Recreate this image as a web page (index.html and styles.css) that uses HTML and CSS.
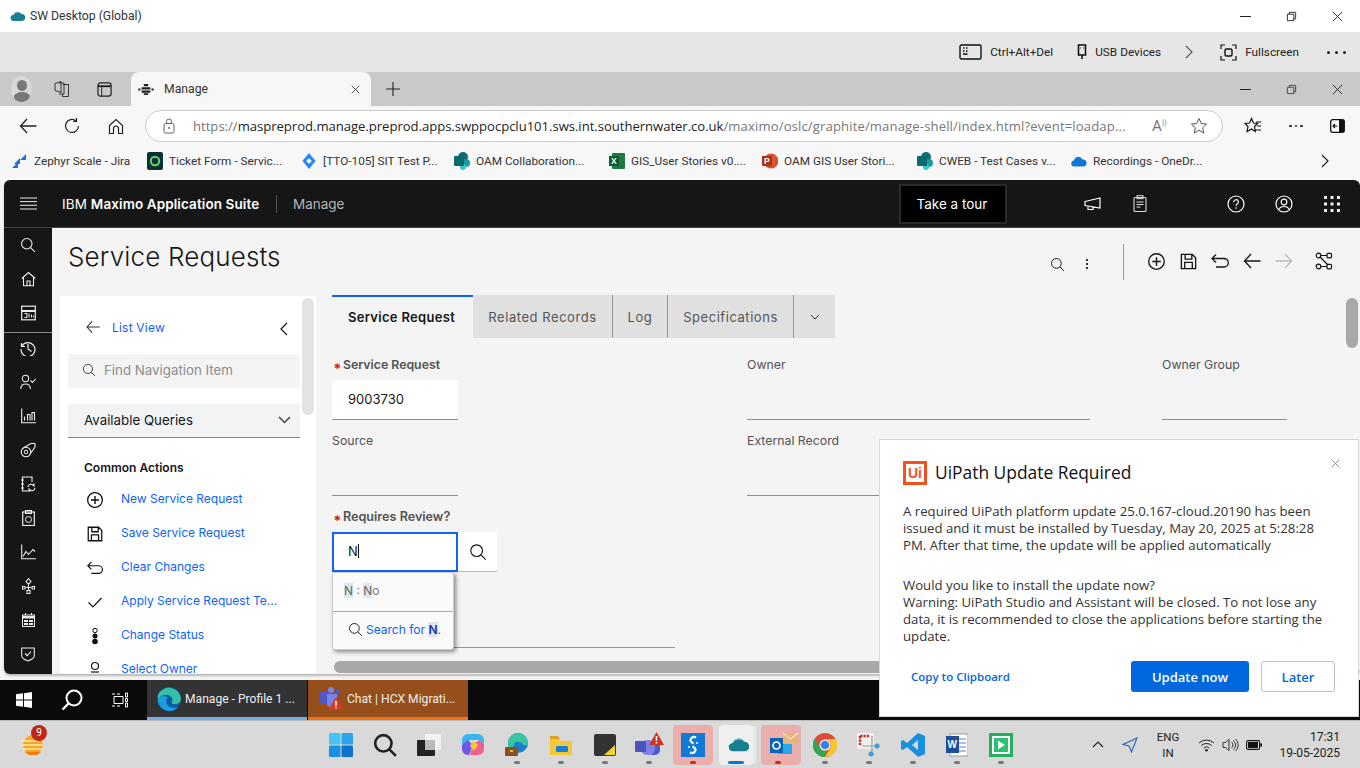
FILE: index.html
```html
<!DOCTYPE html>
<html lang="en">
<head>
    <meta charset="UTF-8">
    <title>SW Desktop (Global)</title>
    <link rel="stylesheet" href="styles.css">
</head>
<body>
    <svg class="sprites" width="0" height="0">
        <defs>
            <symbol id="i-search" viewBox="0 0 20 20"><circle cx="8.5" cy="8.5" r="6.5" fill="none" stroke="currentColor" stroke-width="1.3"/><path d="M13.2 13.2 18.5 18.5" stroke="currentColor" stroke-width="1.3"/></symbol>
            <symbol id="i-add" viewBox="0 0 20 20"><circle cx="10" cy="10" r="8.2" fill="none" stroke="currentColor" stroke-width="1.4"/><path d="M10 5.5v9M5.5 10h9" stroke="currentColor" stroke-width="1.6"/></symbol>
            <symbol id="i-save" viewBox="0 0 20 20"><path d="M3 2.5h11l3.5 3.5v11.500H2.5V2.5zM6.5 2.5v5h7v-5M6 17.5v-6.5h8v6.500" fill="none" stroke="currentColor" stroke-width="1.4"/></symbol>
            <symbol id="i-undo" viewBox="0 0 20 20"><path d="M6 3.5 2 7.5 6 11.5M2 7.5h12a4 4 0 0 1 0 8.500H6" fill="none" stroke="currentColor" stroke-width="1.3"/></symbol>
            <symbol id="i-back" viewBox="0 0 20 20"><path d="M9 3 2.5 10 9 17M2.5 10h16" fill="none" stroke="currentColor" stroke-width="1.3"/></symbol>
            <symbol id="i-next" viewBox="0 0 20 20"><path d="M11 3l6.5 7-6.500 7M17.500 10h-16" fill="none" stroke="currentColor" stroke-width="1.3"/></symbol>
            <symbol id="i-close" viewBox="0 0 12 12"><path d="M1 1l10 10M11 1 1 11" stroke="currentColor" stroke-width="1"/></symbol>
            <symbol id="i-restore" viewBox="0 0 12 12"><path d="M1.500 3.500h7v7h-7zM3.500 3.500v-2h7v7h-2" fill="none" stroke="currentColor" stroke-width="1"/></symbol>
            <symbol id="i-cloud" viewBox="0 0 20 16"><path d="M5 14.500a4 4 0 0 1-.5-8 6 6 0 0 1 11-1 4.500 4.500 0 0 1 .5 9z" fill="#167f92"/><path d="M4.500 6.500a6 6 0 0 1 11-1 7 7 0 0 0-11 1z" fill="#8fd3d8"/></symbol>
            <symbol id="i-share" viewBox="0 0 16 18"><circle cx="9" cy="5" r="5" fill="#0f6f74"/><circle cx="12" cy="11" r="4" fill="#1c9aa0"/><circle cx="9" cy="15" r="3" fill="#37c6d0"/><rect x="0" y="4" width="10" height="10" rx="1" fill="#0b6a6e"/></symbol>
        </defs>
    </svg>

    <header class="title-bar">
        <svg class="cloud-small"><use href="#i-cloud"/></svg>
        <span class="title-text">SW Desktop (Global)</span>
        <div class="win-controls">
            <span class="win-min"></span>
            <svg class="win-icon"><use href="#i-restore"/></svg>
            <svg class="win-icon"><use href="#i-close"/></svg>
        </div>
    </header>

    <div class="citrix-bar">
        <span class="citrix-item">
            <svg width="23" height="16" viewBox="0 0 23 16"><rect x="1" y="1" width="21" height="14" rx="1.500" fill="none" stroke="#111" stroke-width="1.400"/><path d="M4 4h1.500M7 4h1.500M4 7h1.500M7 7h1.500M4 10h4.500" stroke="#111" stroke-width="1.400"/></svg>
            Ctrl+Alt+Del
        </span>
        <span class="citrix-item usb">
            <svg width="10" height="16" viewBox="0 0 10 16"><path d="M1.500 1h7v10h-7zM5 11v4M3.500 4h.6M6 4h.6" fill="none" stroke="#111" stroke-width="1.600"/></svg>
            USB Devices
        </span>
        <svg class="citrix-chevron" width="8" height="14" viewBox="0 0 8 14"><path d="M1 1l6 6-6 6" fill="none" stroke="#555" stroke-width="1.100"/></svg>
        <span class="citrix-item full">
            <svg width="17" height="17" viewBox="0 0 17 17"><path d="M1 5V1h4M12 1h4v4M16 12v4h-4M5 16H1v-4" fill="none" stroke="#111" stroke-width="1.200"/><rect x="5" y="5" width="7" height="7" rx="1.500" fill="none" stroke="#111" stroke-width="1.400"/></svg>
            Fullscreen
        </span>
        <span class="citrix-more"><i></i><i></i><i></i></span>
    </div>

    <div class="tab-strip">
        <span class="avatar"><i class="avatar-head"></i><i class="avatar-body"></i></span>
        <svg class="strip-icon" width="16" height="18" viewBox="0 0 16 18"><path d="M1 3.500 7 1.500v11L1 10.500zM5 3h5v11H5M9 4.500h5.500v12H8.500V14" fill="none" stroke="#333" stroke-width="1"/></svg>
        <svg class="strip-icon" width="15" height="15" viewBox="0 0 16 16"><rect x="1" y="1" width="14" height="14" rx="2.500" fill="none" stroke="#222" stroke-width="1.300"/><path d="M1 4.500h14" stroke="#222" stroke-width="2"/><path d="M5 4.500V15" stroke="#222" stroke-width="1"/></svg>
        <div class="tab-active">
            <svg width="16" height="11" viewBox="0 0 14 10"><path d="M5 0h4v2H5zM3 3h8v2H3zM0 4h2v2H0zM12 4h2v2h-2zM3 6h8v2H3zM5 8.500h4V10H5z" fill="#222"/></svg>
            <span class="tab-label">Manage</span>
            <svg class="tab-close"><use href="#i-close"/></svg>
        </div>
        <svg class="tab-plus" width="14" height="14" viewBox="0 0 14 14"><path d="M7 0v14M0 7h14" stroke="#222" stroke-width="1.100"/></svg>
        <div class="win-controls">
            <span class="win-min"></span>
            <svg class="win-icon grey"><use href="#i-restore"/></svg>
            <svg class="win-icon"><use href="#i-close"/></svg>
        </div>
    </div>

    <div class="address-bar">
        <svg class="nav-back" width="20" height="20"><use href="#i-back"/></svg>
        <svg class="nav-refresh" width="18" height="18" viewBox="0 0 18 18"><path d="M15.500 9a6.500 6.500 0 1 1-2.500-5.200M13.500 1v3.300h-3.300" fill="none" stroke="#222" stroke-width="1.200"/></svg>
        <svg class="nav-home" width="16" height="17" viewBox="0 0 16 17"><path d="M1.500 7.500 8 1.500l6.500 6v8h-4v-5a2.500 2.500 0 0 0-5 0v5h-4z" fill="none" stroke="#222" stroke-width="1.200"/></svg>
        <div class="url-box">
            <svg width="12" height="16" viewBox="0 0 12 16"><rect x="1" y="5.500" width="10" height="9.500" rx="1.500" fill="none" stroke="#666" stroke-width="1"/><path d="M3.500 5.500V3.500a2.500 2.500 0 0 1 5 0v2" fill="none" stroke="#666"/><circle cx="6" cy="10" r=".9" fill="#666"/></svg>
            <span class="url-text"><span class="url-dim">https://</span><span class="url-host">maspreprod.manage.preprod.apps.swppocpclu101.sws.int.southernwater.co.uk</span><span class="url-dim url-path">/maximo/oslc/graphite/manage-shell/index.html?event=loadap...</span></span>
            <span class="read-aloud">A<sup>))</sup></span>
            <svg width="18" height="18" viewBox="0 0 18 18"><path d="M9 1.500l2.300 5 5.300.6-3.900 3.600 1 5.300L9 13.300 4.300 16l1-5.300L1.400 7.100l5.300-.6z" fill="none" stroke="#555" stroke-width="1"/></svg>
        </div>
        <svg class="fav-icon" width="18" height="18" viewBox="0 0 18 18"><path d="M7.500 1.500 9.500 6l4 .5-3 3 .8 5-3.800-2.500L3 14.500l1-5L1 6.500 5.500 6zM12 5h5M13 9h4M11.500 13H17" fill="none" stroke="#111" stroke-width="1.200"/></svg>
        <span class="dots-small"><i></i><i></i><i></i></span>
        <svg class="split-icon" width="15" height="14" viewBox="0 0 15 14"><rect x=".7" y=".7" width="13.600" height="12.600" rx="2" fill="#fff" stroke="#111" stroke-width="1.300"/><rect x="9" y="1" width="5" height="12" fill="#111"/><path d="M7.500 7H3M5 5 3 7l2 2" fill="none" stroke="#111" stroke-width="1.200"/></svg>
    </div>

    <nav class="bookmarks">
        <span class="bookmark b-zephyr">
            <svg width="14" height="14" viewBox="0 0 14 14"><path d="M14 0v6H8zM8 4v6H2zM6 8v6H0z" fill="#1f6fe0"/></svg>
            Zephyr Scale - Jira
        </span>
        <span class="bookmark b-ticket">
            <svg width="16" height="18" viewBox="0 0 16 18"><rect width="16" height="18" rx="2" fill="#0a3236"/><circle cx="8" cy="9" r="4.200" fill="none" stroke="#6fd56f" stroke-width="2"/></svg>
            Ticket Form - Servic...
        </span>
        <span class="bookmark b-tto">
            <svg width="14" height="16" viewBox="0 0 13 16"><path d="M6.500 0 13 8l-6.500 8L0 8z" fill="#2684ff"/><rect x="4.500" y="6" width="4" height="4" fill="#fff" transform="rotate(45 6.500 8)"/></svg>
            [TTO-105] SIT Test P...
        </span>
        <span class="bookmark b-oam">
            <svg width="16" height="18"><use href="#i-share"/></svg>
            OAM Collaboration...
        </span>
        <span class="bookmark b-gis">
            <svg width="16" height="16" viewBox="0 0 16 16"><rect x="3" width="13" height="16" rx="1" fill="#1d7a45"/><rect width="10" height="10" y="3" fill="#0e5c2f"/><text x="2" y="11" font-size="8.500" font-weight="700" fill="#fff" font-family="Liberation Sans">X</text></svg>
            GIS_User Stories v0....
        </span>
        <span class="bookmark b-gisp">
            <svg width="16" height="16" viewBox="0 0 16 16"><circle cx="9" cy="8" r="7.500" fill="#d8542f"/><rect y="3" width="10" height="10" fill="#a8341a"/><text x="2" y="11" font-size="8.500" font-weight="700" fill="#fff" font-family="Liberation Sans">P</text></svg>
            OAM GIS User Stori...
        </span>
        <span class="bookmark b-cweb">
            <svg width="16" height="18"><use href="#i-share"/></svg>
            CWEB - Test Cases v...
        </span>
        <span class="bookmark b-rec">
            <svg width="16" height="11" viewBox="0 0 16 11"><path d="M3.500 10.500a3 3 0 0 1-.5-6 4.500 4.500 0 0 1 8.500-1 3.500 3.500 0 0 1 1 7z" fill="#1278d4"/></svg>
            Recordings - OneDr...
        </span>
        <svg class="bookmark-more" width="8" height="14" viewBox="0 0 8 14"><path d="M1 1l6 6-6 6" fill="none" stroke="#222" stroke-width="1.200"/></svg>
    </nav>

    <main class="maximo">
        <div class="mas-header">
            <svg class="mas-burger" width="17" height="13" viewBox="0 0 17 13"><path d="M0 1h17M0 4.600h17M0 8.300h17M0 12h17" stroke="#e8e8e8" stroke-width="1"/></svg>
            <span class="mas-brand">IBM <b>Maximo Application Suite</b></span>
            <span class="mas-app">Manage</span>
            <span class="mas-tour">Take a tour</span>
            <svg class="mas-ic ic-mega" width="17" height="14" viewBox="0 0 17 14"><path d="M1 4.500 16 1v10L1 8.500zM4 9v3.500h5V10.200" fill="none" stroke="#fff" stroke-width="1.200"/></svg>
            <svg class="mas-ic ic-clip" width="14" height="17" viewBox="0 0 14 17"><rect x="1" y="2.500" width="12" height="14" rx="1" fill="none" stroke="#ddd" stroke-width="1.100"/><rect x="4" y=".7" width="6" height="3" fill="none" stroke="#ddd"/><path d="M3.500 7h7M3.500 9.500h7M3.500 12h4" stroke="#ddd"/></svg>
            <svg class="mas-ic ic-help" width="18" height="18" viewBox="0 0 18 18"><circle cx="9" cy="9" r="8" fill="none" stroke="#fff" stroke-width="1.200"/><path d="M6.800 7a2.300 2.300 0 1 1 3.300 2.100c-.8.400-1.100.8-1.100 1.700" fill="none" stroke="#fff" stroke-width="1.200"/><circle cx="9" cy="13" r=".8" fill="#fff"/></svg>
            <svg class="mas-ic ic-user" width="18" height="18" viewBox="0 0 18 18"><circle cx="9" cy="9" r="8" fill="none" stroke="#fff" stroke-width="1.200"/><circle cx="9" cy="7" r="2.800" fill="none" stroke="#fff" stroke-width="1.200"/><path d="M3.800 14.500c1-2.300 2.800-3 5.200-3s4.200.7 5.200 3" fill="none" stroke="#fff" stroke-width="1.200"/></svg>
            <svg class="mas-ic ic-grid" width="16" height="16" viewBox="0 0 16 16"><path d="M0 0h3v3H0zM6.500 0h3v3h-3zM13 0h3v3h-3zM0 6.500h3v3H0zM6.500 6.500h3v3h-3zM13 6.500h3v3h-3zM0 13h3v3H0zM6.500 13h3v3h-3zM13 13h3v3h-3z" fill="#eee"/></svg>
        </div>

        <div class="mas-body">
            <aside class="side-rail">
                <svg class="rail-ic" width="16" height="16"><use href="#i-search"/></svg>
                <svg class="rail-ic" width="15" height="15" viewBox="0 0 15 15"><path d="M.7 7 7.500 1 14.300 7M2.500 6v8.300h10V6M6 14.300V9.500h3v4.800" fill="none" stroke="currentColor" stroke-width="1.100"/></svg>
                <svg class="rail-ic" width="15" height="15" viewBox="0 0 15 15"><rect x=".7" y=".7" width="13.600" height="13.600" fill="none" stroke="currentColor" stroke-width="1.200"/><path d="M1 5.500h13" stroke="currentColor" stroke-width="2"/><path d="M3.500 8h2.500v4H3.500M8 8v4M10.500 9v3M12.500 10v2" fill="none" stroke="currentColor"/></svg>
                <span class="rail-sep"></span>
                <svg class="rail-ic" width="16" height="16" viewBox="0 0 16 16"><path d="M1.500 3v3.500H5M2 6a7 7 0 1 1-1 3M8 4v5l3.500 2.500" fill="none" stroke="currentColor" stroke-width="1.200"/></svg>
                <svg class="rail-ic" width="16" height="15" viewBox="0 0 16 15"><circle cx="5.500" cy="4" r="3.200" fill="none" stroke="currentColor" stroke-width="1.100"/><path d="M.7 14.500c0-3.500 2-5 4.800-5s4.800 1.500 4.800 5M10.500 6l2 2 3-3.500" fill="none" stroke="currentColor" stroke-width="1.100"/></svg>
                <svg class="rail-ic" width="15" height="15" viewBox="0 0 15 15"><path d="M.7 0v14.300H15M3.500 12V8M6.500 12V6h2.500v6M11 12V4h2.500v8" fill="none" stroke="currentColor" stroke-width="1.100"/></svg>
                <svg class="rail-ic" width="16" height="16" viewBox="0 0 16 16"><circle cx="6" cy="10" r="4.800" fill="none" stroke="currentColor" stroke-width="1.100"/><circle cx="6" cy="10" r="1.800" fill="none" stroke="currentColor"/><path d="M3 6 11 1.500h4V5l-5 7M13 3.200h.1" fill="none" stroke="currentColor" stroke-width="1.100"/></svg>
                <svg class="rail-ic" width="15" height="16" viewBox="0 0 15 16"><path d="M9 15H1.500V1H11v5M0 4h3M0 8h3M0 12h3M7 11a3 3 0 0 1 5-2l1 1V7.500M14 12a3 3 0 0 1-5 2l-1-1v2.500" fill="none" stroke="currentColor" stroke-width="1.100"/></svg>
                <svg class="rail-ic" width="13" height="16" viewBox="0 0 13 16"><rect x=".7" y="2" width="11.600" height="13.500" fill="none" stroke="currentColor" stroke-width="1.200"/><rect x="3.500" y=".5" width="6" height="3" fill="none" stroke="currentColor"/><circle cx="6.500" cy="9.500" r="3" fill="none" stroke="currentColor"/></svg>
                <svg class="rail-ic" width="15" height="15" viewBox="0 0 15 15"><path d="M.7 0v14.300H15M2 12l3-5 2.500 3L12 5l2 2" fill="none" stroke="currentColor" stroke-width="1.100"/></svg>
                <svg class="rail-ic" width="15" height="16" viewBox="0 0 15 16"><path d="M7.500.7 10 3.500 7.500 6.300 5 3.500zM1.500 8.500h2.500V11H1.500zM11 8.500h2.500V11H11zM6 12.500h3V15.500H6zM7.500 6.300v6.200M5 9.500h5" fill="none" stroke="currentColor" stroke-width="1.100"/></svg>
                <svg class="rail-ic" width="13" height="14" viewBox="0 0 13 14"><rect x=".5" y="2" width="12" height="11.500" fill="none" stroke="currentColor"/><path d="M0 3h13v2.500H0zM3 0h1v2H3zM9 0h1v2H9zM2 7h4v2H2zM7 7h4v2H7zM7 10h4v2H7zM2 10h4v2H2z" fill="currentColor"/></svg>
                <svg class="rail-ic" width="14" height="15" viewBox="0 0 14 15"><path d="M.7 1.500h12.600V9c0 2.500-3.500 4.500-6.300 5.500C4.200 13.500.7 11.500.7 9zM4 7l2.200 2.200L10 5" fill="none" stroke="currentColor" stroke-width="1.100"/></svg>
            </aside>

            <div class="page">
                <div class="page-head">
                    <h1 class="page-title">Service Requests</h1>
                    <div class="page-actions">
                        <svg class="pa-search" width="15" height="15"><use href="#i-search"/></svg>
                        <span class="kebab"><i></i><i></i><i></i></span>
                        <span class="pa-sep"></span>
                        <svg class="pa-ic" width="19" height="19"><use href="#i-add"/></svg>
                        <svg class="pa-ic" width="19" height="19"><use href="#i-save"/></svg>
                        <svg class="pa-ic" width="20" height="20"><use href="#i-undo"/></svg>
                        <svg class="pa-ic" width="20" height="20"><use href="#i-back"/></svg>
                        <svg class="pa-ic muted" width="20" height="20"><use href="#i-next"/></svg>
                        <svg class="pa-ic wide" width="18" height="18" viewBox="0 0 18 18"><circle cx="3.500" cy="3.500" r="2.300" fill="none" stroke="#111" stroke-width="1.200"/><rect x="12" y="1.300" width="4.500" height="4.500" rx="1" fill="none" stroke="#111" stroke-width="1.200"/><circle cx="3.500" cy="14.500" r="2.300" fill="none" stroke="#111" stroke-width="1.200"/><rect x="12" y="12.300" width="4.500" height="4.500" rx="1" fill="none" stroke="#111" stroke-width="1.200"/><path d="M6 3.500h6M6 14.500h6M5 5l8 8" stroke="#111" stroke-width="1.200"/></svg>
                    </div>
                </div>

                <div class="page-main">
                    <section class="side-nav">
                        <div class="side-nav-inner">
                            <div class="list-view">
                                <svg width="16" height="16"><use href="#i-back"/></svg>
                                <span class="link">List View</span>
                                <svg class="list-chevron" width="8" height="14" viewBox="0 0 8 14"><path d="M7 1 1 7l6 6" fill="none" stroke="#161616" stroke-width="1.200"/></svg>
                            </div>
                            <div class="find-box">
                                <svg width="14" height="14"><use href="#i-search"/></svg>
                                Find Navigation Item
                            </div>
                            <div class="queries">
                                <span>Available Queries</span>
                                <svg width="13" height="8" viewBox="0 0 13 8"><path d="M1 1l5.500 5.500L12 1" fill="none" stroke="#444" stroke-width="1.500"/></svg>
                            </div>
                            <h3 class="actions-head">Common Actions</h3>
                            <ul class="actions">
                                <li><svg width="18" height="18"><use href="#i-add"/></svg><span class="link">New Service Request</span></li>
                                <li><svg width="18" height="18"><use href="#i-save"/></svg><span class="link">Save Service Request</span></li>
                                <li><svg width="18" height="18"><use href="#i-undo"/></svg><span class="link">Clear Changes</span></li>
                                <li><svg width="18" height="18" viewBox="0 0 18 18"><path d="M2.500 9.500 7 14l8.500-9" fill="none" stroke="#111" stroke-width="1.200"/></svg><span class="link">Apply Service Request Te...</span></li>
                                <li><svg width="18" height="18" viewBox="0 0 18 18"><circle cx="9" cy="3.500" r="2.200" fill="none" stroke="#111"/><circle cx="9" cy="9" r="2.500" fill="#111"/><circle cx="9" cy="14.500" r="2.800" fill="#111"/></svg><span class="link">Change Status</span></li>
                                <li><svg width="18" height="18" viewBox="0 0 18 18"><circle cx="9" cy="5" r="3.500" fill="none" stroke="#111" stroke-width="1.200"/><path d="M5 11h8" stroke="#111" stroke-width="1.200"/></svg><span class="link">Select Owner</span></li>
                            </ul>
                        </div>
                        <div class="side-scroll"><i></i></div>
                    </section>

                    <section class="record">
                        <div class="tabs">
                            <span class="tab current">Service Request</span>
                            <span class="tab t-related">Related Records</span>
                            <span class="tab t-log">Log</span>
                            <span class="tab t-spec">Specifications</span>
                            <span class="tab tab-more"><svg width="10" height="6" viewBox="0 0 10 6"><path d="M1 1l4 4 4-4" fill="none" stroke="#333" stroke-width="1"/></svg></span>
                        </div>
                        <div class="form-row row-one">
                            <div class="field col-a">
                                <label class="req"><em>✱</em>Service Request</label>
                                <div class="input filled">9003730</div>
                            </div>
                            <div class="field col-b">
                                <label>Owner</label>
                                <div class="input"></div>
                            </div>
                            <div class="field col-c">
                                <label>Owner Group</label>
                                <div class="input"></div>
                            </div>
                        </div>
                        <div class="form-row row-two">
                            <div class="field col-a">
                                <label>Source</label>
                                <div class="input"></div>
                            </div>
                            <div class="field col-b">
                                <label>External Record</label>
                                <div class="input"></div>
                            </div>
                        </div>
                        <div class="review">
                            <label class="req"><em>✱</em>Requires Review?</label>
                            <div class="review-line">
                                <div class="input focused">N<i class="caret"></i></div>
                                <span class="lookup"><svg width="18" height="18"><use href="#i-search"/></svg></span>
                            </div>
                            <div class="under-rule"></div>
                            <div class="suggest">
                                <div class="suggest-row"><span><mark>N</mark> : <mark>N</mark>o</span></div>
                                <div class="suggest-row search-for"><svg width="15" height="15"><use href="#i-search"/></svg><span>Search for <mark>N</mark>.</span></div>
                            </div>
                        </div>
                        <div class="h-scroll"></div>
                        <div class="v-scroll"></div>
                    </section>
                </div>
            </div>
        </div>
    </main>

    <div class="host-taskbar">
        <svg class="start" width="16" height="16" viewBox="0 0 16 16"><path d="M0 2.300 7 1.300v6.200H0zM8 1.200 16 0v7.500H8zM0 8.500h7v6.200L0 13.700zM8 8.500h8V16l-8-1.200z" fill="#fff"/></svg>
        <svg class="host-search" width="22" height="22" viewBox="0 0 22 22"><circle cx="13" cy="9" r="7.500" fill="none" stroke="#fff" stroke-width="2"/><path d="M7.500 14.500 1.500 20.500" stroke="#fff" stroke-width="2.400"/></svg>
        <svg class="host-view" width="16" height="16" viewBox="0 0 16 16"><path d="M2 4.500h9v7H2zM0 2h3M5 2h3M0 14h3M5 14h3M13.500 1h2v4h-2zM13.500 6.500h2v3h-2zM13.500 11h2v4h-2z" fill="none" stroke="#fff" stroke-width="1"/></svg>
        <div class="host-task edge">
            <svg width="24" height="24" viewBox="0 0 24 24"><circle cx="12" cy="12" r="12" fill="#0c59a4"/><path d="M1 12c-.5 6 5 12 11.500 12 3.500 0 6.500-1.500 8.500-4-3 1.500-7 1-9.500-1-2.500-2-3-6-.5-9C6 8 2 9 1 12z" fill="#1b9de2"/><path d="M1 8A12 12 0 0 1 24 12c0 3-2.500 5-6 5-2 0-3.500-.5-3.500-1.500 0-.6 1-1 1-2.500 0-3-3-5-6.500-5C5.500 8 2.500 9.500 1 12z" fill="#35c1a3"/></svg>
            <span>Manage - Profile 1 ...</span>
        </div>
        <div class="host-task teams">
            <svg width="26" height="24" viewBox="0 0 26 24"><rect x="1" y="5" width="11" height="11" rx="1" fill="#5059c9"/><circle cx="12" cy="3" r="3" fill="#7b83eb"/><circle cx="18" cy="5" r="2.500" fill="#5059c9"/><path d="M8 7h10v9a5 5 0 0 1-10 0z" fill="#7b83eb"/><path d="M17 10 25 23H9z" fill="#d13f2a"/><path d="M17 14v5M17 20.300v1.200" stroke="#fff" stroke-width="1.500"/></svg>
            <span>Chat | HCX Migrati...</span>
        </div>
    </div>

    <footer class="win-taskbar">
        <span class="weather">
            <svg width="24" height="26" viewBox="0 0 24 26"><circle cx="13" cy="13" r="10" fill="#f5a623"/><path d="M0 9h18M1 13h22M3 17h20" stroke="#fde9b3" stroke-width="1.500"/><path d="M5 20h16l-4 3H9z" fill="#ee7a10"/></svg>
            <i class="badge">9</i>
        </span>
        <div class="pins">
            <svg class="pin" width="24" height="24" viewBox="0 0 24 24"><rect width="11.500" height="11.500" rx="1" fill="#45c3f5"/><rect x="12.500" width="11.500" height="11.500" rx="1" fill="#2aa4ea"/><rect y="12.500" width="11.500" height="11.500" rx="1" fill="#1a90e0"/><rect x="12.500" y="12.500" width="11.500" height="11.500" rx="1" fill="#0d75cc"/></svg>
            <svg class="pin" width="24" height="24" viewBox="0 0 22 22"><circle cx="9.500" cy="9.500" r="7.500" fill="none" stroke="#222" stroke-width="2.400"/><path d="M15 15l6 6" stroke="#222" stroke-width="2.400"/></svg>
            <svg class="pin" width="24" height="24" viewBox="0 0 24 22"><rect x="8" width="16" height="16" rx="1" fill="#f2f2f2"/><rect y="6" width="18" height="16" rx="1" fill="#222"/><rect x="8" y="6" width="10" height="10" fill="#bbb"/></svg>
            <svg class="pin" width="24" height="24" viewBox="0 0 24 24"><path d="M7 1h10a6 6 0 0 1 6 6v4l-5-4H8L1 12V7a6 6 0 0 1 6-6z" fill="#38b6f0"/><path d="M1 12l6-5 5 5-4 10H7a6 6 0 0 1-6-6z" fill="#6f57e8"/><path d="M12 12l6-5 5 4v5a6 6 0 0 1-6 6h-8z" fill="#f0608f"/><path d="M12 8l5 4-4 6-4-5z" fill="#f6c63c"/></svg>
            <span class="pin-wrap run">
                <svg width="24" height="24" viewBox="0 0 24 24"><circle cx="13" cy="10" r="10" fill="#1a7fd0"/><path d="M3 10a10 10 0 0 1 20 0c0 2-3 3-5 2-1-3-4-4-7-3-3 2-3 5-1 8l-7-1z" fill="#38c6a0"/><rect y="14" width="13" height="9" rx="1" fill="#8a5020"/><rect x="5" y="17" width="3" height="2" fill="#f0c040"/></svg>
            </span>
            <span class="pin-wrap run">
                <svg width="24" height="24" viewBox="0 0 24 24"><path d="M1 6h9l2 2h11v14H1z" fill="#f5c83c"/><path d="M1 3h8l2 3H1z" fill="#e0a020"/><rect x="7" y="13" width="12" height="6" rx="1" fill="#1680d8"/></svg>
            </span>
            <span class="pin-wrap run">
                <svg width="22" height="22" viewBox="0 0 22 22"><rect width="22" height="22" rx="2" fill="#333"/><path d="M21 11v10H10z" fill="#f6d51f"/></svg>
            </span>
            <span class="pin-wrap run">
                <svg width="29" height="25" viewBox="0 0 29 25"><circle cx="22" cy="11" r="4" fill="#5059c9"/><rect x="13" y="11" width="12" height="12" rx="5" fill="#5059c9"/><rect x="6" y="8" width="14" height="15" rx="6" fill="#7b83eb"/><rect y="9" width="11" height="11" rx="1" fill="#4b53bc"/><path d="M21.500 0 29 13H14z" fill="#d4301f"/><path d="M21.500 4v5M21.500 10v1.500" stroke="#fff" stroke-width="1.600"/></svg>
            </span>
            <span class="pin-wrap flagged run-red">
                <svg width="24" height="24" viewBox="0 0 24 24"><rect width="24" height="24" fill="#0f7ad8"/><path d="M15 4.500a4 4 0 0 0-5 1c-1 1.500-.5 3 1 4l1.500 1M9 19.500a4 4 0 0 0 5-1c1-1.500.5-3-1-4l-1.500-1" fill="none" stroke="#fff" stroke-width="2.200"/><circle cx="16" cy="10" r="1" fill="#fff"/><circle cx="8" cy="14" r="1" fill="#fff"/></svg>
            </span>
            <span class="pin-wrap current-app run-blue">
                <svg width="21" height="17"><use href="#i-cloud"/></svg>
            </span>
            <span class="pin-wrap flagged wide-flag run-red">
                <svg width="28" height="24" viewBox="0 0 28 24"><rect x="8" y="5" width="14" height="16" fill="#28a8ea"/><rect y="5" width="13" height="15" fill="#0a64b8"/><circle cx="6.500" cy="12.500" r="3.500" fill="none" stroke="#fff" stroke-width="1.700"/><rect x="13" width="15" height="11" fill="#e7b77a"/><path d="M13 0l7.500 6L28 0" fill="none" stroke="#fff" stroke-width="1"/></svg>
            </span>
            <span class="pin-wrap run">
                <svg width="24" height="24" viewBox="0 0 24 24"><circle cx="12" cy="12" r="12" fill="#dd4b39"/><path d="M12 24A12 12 0 0 1 1.600 6L7 15l5 3z" fill="#2fa84f"/><path d="M12 6h10.500A12 12 0 0 1 12 24l5-9a6 6 0 0 0-5-9z" fill="#f9c62d"/><circle cx="12" cy="12" r="5.500" fill="#fff"/><circle cx="12" cy="12" r="4.300" fill="#3a7fe8"/></svg>
            </span>
            <span class="pin-wrap run">
                <svg width="24" height="25" viewBox="0 0 24 25"><rect x="0" y="1" width="17" height="16" rx="1" fill="#f0f0f0"/><path d="M3 4h9M3 4v9" stroke="#cc2a1c" stroke-width="2.400" stroke-dasharray="2.400 1"/><path d="M15 4v20M5 14h18" stroke="#999" stroke-width="1.200"/><circle cx="20" cy="14" r="2.500" fill="#3a9be0"/><circle cx="14" cy="22" r="2.500" fill="#3a9be0"/></svg>
            </span>
            <span class="pin-wrap run">
                <svg width="24" height="24" viewBox="0 0 24 24"><path d="M17 0 24 3v18l-7 3L6 14l-4 3-2-1V8l2-1 4 3zM17 7l-6 5 6 5z" fill="#1a8fdc"/></svg>
            </span>
            <span class="pin-wrap run">
                <svg width="22" height="24" viewBox="0 0 22 24"><rect x="4" y="1" width="18" height="22" fill="#fff" stroke="#99a"/><path d="M13 6h7M13 10h7M13 14h7M13 18h7" stroke="#5a7fc0"/><rect y="3" width="13" height="17" fill="#1f4e9a"/><text x="1.500" y="15" font-size="10" font-weight="700" fill="#fff" font-family="Liberation Sans">W</text></svg>
            </span>
            <span class="pin-wrap run">
                <svg width="24" height="24" viewBox="0 0 24 24"><rect width="24" height="24" fill="#20b060"/><rect x="3" y="3" width="18" height="18" fill="#fff"/><rect x="5" y="5" width="14" height="14" fill="#2cc071"/><path d="M9 7.500v9l7-4.500z" fill="#fff"/></svg>
            </span>
        </div>
        <div class="tray">
            <svg class="tray-up" width="12" height="7" viewBox="0 0 12 7"><path d="M1 6l5-5 5 5" fill="none" stroke="#222" stroke-width="1.200"/></svg>
            <svg class="tray-send" width="16" height="16" viewBox="0 0 16 16"><path d="M15 1 1 7.500l6 1.500 2.500 6z" fill="none" stroke="#2a62b8" stroke-width="1.100"/></svg>
            <span class="tray-lang">ENG<br>IN</span>
            <svg class="tray-wifi" width="17" height="14" viewBox="0 0 17 14"><path d="M1 5a11 11 0 0 1 15 0M3.300 7.600a7.500 7.500 0 0 1 10.400 0M5.700 10a4 4 0 0 1 5.600 0" fill="none" stroke="#222" stroke-width="1"/><circle cx="8.500" cy="12.300" r="1.300" fill="#222"/></svg>
            <svg class="tray-vol" width="17" height="14" viewBox="0 0 17 14"><path d="M1 4.500h2.500L7 1.500v11L3.500 9.500H1zM9.500 4a4 4 0 0 1 0 6M11.500 2.500a6 6 0 0 1 0 9M13.500 1a8 8 0 0 1 0 12" fill="none" stroke="#222" stroke-width=".9"/></svg>
            <svg class="tray-batt" width="16" height="10" viewBox="0 0 16 10"><rect x=".6" y=".6" width="13" height="8.800" rx="1.500" fill="none" stroke="#111" stroke-width="1.100"/><rect x="2" y="2" width="10" height="6" fill="#111"/><rect x="14.200" y="3.500" width="1.800" height="3" fill="#111"/></svg>
            <span class="tray-clock">17:31<br>19-05-2025</span>
        </div>
    </footer>

    <div class="dialog">
        <svg class="dialog-close"><use href="#i-close"/></svg>
        <div class="dialog-title">
            <span class="ui-logo">Ui</span>
            UiPath Update Required
        </div>
        <p class="dialog-text">A required UiPath platform update 25.0.167-cloud.20190 has been issued and it must be installed by Tuesday, May 20, 2025 at 5:28:28 PM. After that time, the update will be applied automatically</p>
        <p class="dialog-text second">Would you like to install the update now?<br>Warning: UiPath Studio and Assistant will be closed. To not lose any data, it is recommended to close the applications before starting the update.</p>
        <div class="dialog-foot">
            <span class="copy-link">Copy to Clipboard</span>
            <span class="btn primary">Update now</span>
            <span class="btn later">Later</span>
        </div>
    </div>
</body>
</html>
```

FILE: styles.css
```css
* {
    box-sizing: border-box;
}
html, body {
    margin: 0;
    padding: 0;
    width: 1360px;
    height: 768px;
    overflow: hidden;
}
body {
    font-family: Roboto, "Liberation Sans", sans-serif;
    font-size: 11.8px;
    color: #222;
    background-color: #f4f4f4;
    display: flex;
    flex-direction: column;
    position: relative;
}
svg {
    flex: none;
    display: block;
}
i, em {
    font-style: normal;
}
.sprites {
    position: absolute;
}

/* citrix window */
.title-bar {
    height: 32px;
    flex: none;
    background-color: #fff;
    display: flex;
    align-items: center;
    padding-left: 10px;
}
.cloud-small {
    width: 15px;
    height: 12px;
}
.title-text {
    margin-left: 5px;
    font-size: 12.2px;
    color: #333;
}
.win-controls {
    margin-left: auto;
    display: flex;
    align-items: center;
    padding-right: 17px;
    gap: 35px;
}
.win-min {
    width: 11px;
    height: 1px;
    background-color: #222;
}
.win-icon {
    width: 11px;
    height: 11px;
    color: #222;
}
.win-icon.grey {
    color: #444;
}
.citrix-bar {
    height: 40px;
    flex: none;
    background-color: #e6e6e6;
    display: flex;
    align-items: center;
    justify-content: flex-end;
    padding-right: 14px;
}
.citrix-item {
    display: flex;
    align-items: center;
    gap: 8px;
    color: #222;
    margin-right: 24px;
}
.citrix-item.full {
    margin-right: 28px;
}
.citrix-chevron {
    margin-right: 27px;
}
.citrix-more {
    display: flex;
    gap: 5px;
}
.citrix-more i {
    width: 3px;
    height: 3px;
    background-color: #222;
    border-radius: 50%;
}

/* edge */
.tab-strip {
    height: 34px;
    flex: none;
    background-color: #c9c9c9;
    display: flex;
    align-items: center;
    padding-left: 11px;
}
.avatar {
    width: 21px;
    height: 26px;
    border-radius: 50%;
    background-color: #d8d8d8;
    overflow: hidden;
    display: flex;
    flex-direction: column;
    align-items: center;
    gap: 1px;
    padding-top: 4px;
}
.avatar-head {
    width: 10px;
    height: 11px;
    background-color: #777;
    border-radius: 50%;
}
.avatar-body {
    width: 16px;
    height: 10px;
    background-color: #777;
    border-radius: 50% 50% 0 0;
}
.strip-icon {
    margin-left: 22px;
}
.strip-icon + .strip-icon {
    margin-left: 27px;
}
.tab-active {
    width: 240px;
    height: 34px;
    margin-left: 19px;
    background-color: #f7f7f7;
    border-radius: 8px 8px 0 0;
    display: flex;
    align-items: center;
    padding-left: 7px;
}
.tab-label {
    margin-left: 10px;
    font-size: 12.2px;
    color: #333;
}
.tab-close {
    margin-left: auto;
    width: 9px;
    height: 9px;
    color: #222;
    margin-right: 11px;
}
.tab-plus {
    margin-left: 15px;
}
.address-bar {
    height: 40px;
    flex: none;
    background-color: #f7f7f7;
    display: flex;
    align-items: center;
    padding-left: 18px;
}
.nav-back {
    margin-right: 25px;
    color: #222;
}
.nav-refresh {
    margin-right: 27px;
}
.nav-home {
    margin-right: 21px;
}
.url-box {
    width: 1078px;
    height: 32px;
    background-color: #fff;
    border: 1px solid #ccc;
    border-radius: 16px;
    display: flex;
    align-items: center;
    padding-left: 17px;
}
.url-text {
    margin-left: 18px;
    font-family: "Open Sans", "Liberation Sans", sans-serif;
    font-size: 13.1px;
    white-space: nowrap;
    width: 959px;
    overflow: hidden;
}
.url-dim {
    color: #777;
}
.url-host {
    color: #222;
    letter-spacing: -.03px;
}
.url-path {
    letter-spacing: .13px;
}
.read-aloud {
    color: #777;
    font-size: 15px;
    width: 38px;
}
.read-aloud sup {
    font-size: 7px;
}
.fav-icon {
    margin-left: 21px;
}
.dots-small {
    display: flex;
    gap: 3px;
    margin-left: 27px;
}
.dots-small i {
    width: 2.5px;
    height: 2.5px;
    background-color: #222;
    border-radius: 50%;
}
.split-icon {
    margin-left: 27px;
}
.bookmarks {
    height: 34px;
    flex: none;
    background-color: #f7f7f7;
    display: flex;
    align-items: center;
    padding-left: 12px;
    padding-bottom: 4px;
    color: #333;
}
.bookmark {
    display: flex;
    align-items: center;
    gap: 6px;
    white-space: nowrap;
}
.b-zephyr { width: 135px; gap: 8px; }
.b-ticket { width: 155px; }
.b-tto { width: 152px; gap: 7px; }
.b-oam { width: 155px; }
.b-gis { width: 153px; }
.b-gisp { width: 155px; }
.b-cweb { width: 154px; }
.b-rec { width: 150px; }
.bookmark-more {
    margin-left: auto;
    margin-right: 31px;
}

/* maximo */
.maximo {
    height: 494px;
    flex: none;
    margin-left: 4px;
    margin-bottom: 6px;
    background-color: #f4f4f4;
    border-radius: 6px;
    box-shadow: 0 2px 2px #bbb;
    overflow: hidden;
    display: flex;
    flex-direction: column;
}
.mas-header {
    height: 48px;
    flex: none;
    background-color: #161616;
    border-bottom: 1px solid #444;
    display: flex;
    align-items: center;
    padding-left: 16px;
    color: #fff;
}
.mas-brand {
    margin-left: 25px;
    width: 215px;
    font-family: "Inter", "Liberation Sans", sans-serif;
    font-size: 13.5px;
    border-right: 1px solid #555;
    line-height: 18px;
    height: 18px;
    letter-spacing: .1px;
    white-space: nowrap;
}
.mas-brand b {
    font-weight: 600;
}
.mas-app {
    margin-left: 16px;
    font-size: 13.5px;
    font-family: "Inter", "Liberation Sans", sans-serif;
    color: #b5b5b5;
}
.mas-tour {
    margin-left: 555px;
    width: 108px;
    height: 40px;
    border: 2px solid #2b2b2b;
    background-color: #000;
    display: flex;
    align-items: center;
    justify-content: center;
    padding-right: 3px;
    font-family: "Inter", "Liberation Sans", sans-serif;
    font-size: 13.5px;
}
.ic-mega { margin-left: 77px; }
.ic-clip { margin-left: 32px; }
.ic-help { margin-left: 80px; }
.ic-user { margin-left: 30px; }
.ic-grid { margin-left: 31px; }

.mas-body {
    flex: 1;
    min-height: 0;
    display: flex;
}
.side-rail {
    width: 48px;
    flex: none;
    background-color: #161616;
    color: #eee;
    display: flex;
    flex-direction: column;
    align-items: center;
    padding-top: 9px;
    gap: 18px;
}
.rail-ic {
    height: 16px;
}
.rail-sep {
    width: 48px;
    height: 1px;
    flex: none;
    background-color: #888;
    margin-top: -7px;
    margin-bottom: -11px;
}
.page {
    flex: 1;
    min-width: 0;
    display: flex;
    flex-direction: column;
}
.page-head {
    height: 67px;
    flex: none;
    display: flex;
    align-items: flex-start;
    padding-left: 16px;
}
.page-title {
    margin: 11px 0 0;
    font-family: "Inter", "Liberation Sans", sans-serif;
    font-weight: 300;
    font-size: 26px;
    line-height: 36px;
    color: #161616;
    letter-spacing: .15px;
}
.page-actions {
    margin-left: auto;
    display: flex;
    align-items: center;
    height: 36px;
    margin-top: 16px;
    padding-right: 27px;
    color: #161616;
}
.pa-search {
    margin-top: 4px;
}
.kebab {
    display: flex;
    flex-direction: column;
    gap: 2px;
    margin-left: 21px;
    margin-top: 4px;
}
.kebab i {
    width: 2px;
    height: 2px;
    background-color: #333;
}
.pa-sep {
    width: 1px;
    height: 36px;
    background-color: #999;
    margin-left: 35px;
    margin-right: 23px;
}
.pa-ic {
    margin-right: 13px;
    margin-bottom: 2px;
}
.pa-ic + .pa-ic {
    margin-right: 12px;
}
.pa-ic.muted {
    color: #bbb;
    margin-right: 21px;
}
.pa-ic.wide {
    margin-right: 0;
}
.page-main {
    flex: 1;
    min-height: 0;
    display: flex;
    padding-left: 8px;
    padding-bottom: 1px;
}
.side-nav {
    width: 256px;
    flex: none;
    margin-top: 1px;
    background-color: #fff;
    display: flex;
    overflow: hidden;
}
.side-nav-inner {
    width: 240px;
    flex: none;
    padding-left: 8px;
    padding-top: 23px;
}
.side-scroll {
    width: 16px;
    flex: none;
    padding: 2px 2px 0 2px;
}
.side-scroll i {
    display: block;
    width: 12px;
    height: 117px;
    background-color: #e3e3e3;
    border-radius: 6px;
}
.link {
    color: #0f62fe;
    font-family: "Inter", "Liberation Sans", sans-serif;
    font-size: 12px;
}
.list-view {
    display: flex;
    align-items: center;
    height: 16px;
    padding-left: 17px;
    color: #333;
}
.list-view .link {
    margin-left: 11px;
    letter-spacing: .2px;
}
.list-chevron {
    margin-left: auto;
    margin-top: 4px;
    margin-right: 12px;
}
.find-box {
    margin-top: 19px;
    height: 34px;
    background-color: #f4f4f4;
    display: flex;
    align-items: center;
    gap: 8px;
    padding-left: 14px;
    padding-bottom: 2px;
    font-family: "Inter", "Liberation Sans", sans-serif;
    font-size: 13.3px;
    color: #8d8d8d;
}
.find-box svg {
    color: #333;
}
.queries {
    margin-top: 16px;
    height: 34px;
    background-color: #f1f3f5;
    border-bottom: 1px solid #888;
    display: flex;
    align-items: center;
    justify-content: space-between;
    padding: 0 9px 2px 16px;
    font-family: "Inter", "Liberation Sans", sans-serif;
    font-size: 13.3px;
    color: #161616;
}
.actions-head {
    margin: 22px 0 0 16px;
    font-family: "Inter", "Liberation Sans", sans-serif;
    font-size: 12px;
    line-height: 16px;
    font-weight: 600;
    color: #161616;
}
.actions {
    list-style: none;
    margin: 7px 0 0;
    padding: 0 0 0 18px;
    color: #111;
}
.actions li {
    height: 34px;
    display: flex;
    align-items: center;
    gap: 17px;
}
.actions .link {
    margin-top: -3px;
}
.record {
    flex: 1;
    min-width: 0;
    position: relative;
    padding-left: 16px;
    overflow: hidden;
}
.tabs {
    display: flex;
    height: 43px;
}
.tab {
    border-right: 1px solid #999;
    background-color: #e0e0e0;
    display: flex;
    align-items: center;
    justify-content: center;
    font-family: "Inter", "Liberation Sans", sans-serif;
    font-size: 13px;
    letter-spacing: .55px;
    color: #555;
}
.tab.current {
    background-color: #f4f4f4;
    border-top: 2px solid #0f62fe;
    border-right: none;
    color: #161616;
    font-weight: 600;
    letter-spacing: .3px;
    padding-bottom: 2px;
    padding-right: 2px;
    width: 141px;
}
.t-related { width: 140px; }
.t-log { width: 55px; }
.t-spec { width: 126px; }
.tab-more {
    border-right: none;
    width: 41px;
}
.form-row {
    display: flex;
}
.row-one {
    margin-top: 18px;
}
.row-two {
    margin-top: 12px;
}
.field label, .review label {
    display: block;
    height: 16px;
    font-family: "Inter", "Liberation Sans", sans-serif;
    font-size: 12.3px;
    line-height: 18px;
    color: #525252;
    white-space: nowrap;
}
.review label.req {
    font-size: 12.6px;
}
.req {
    font-weight: 600;
}
.req em {
    display: inline-block;
    width: 11px;
    padding-left: 2px;
    color: #da1e28;
    font-family: "DejaVu Sans", sans-serif;
    font-size: 8px;
    font-weight: 700;
    line-height: 0;
}
.input {
    height: 40px;
    margin-top: 8px;
    border-bottom: 1px solid #8d8d8d;
    display: flex;
    align-items: center;
    padding-left: 16px;
    padding-bottom: 2px;
    font-family: "Inter", "Liberation Sans", sans-serif;
    font-size: 13px;
    color: #161616;
}
.input.filled {
    background-color: #fff;
}
.col-a {
    width: 126px;
    margin-right: 289px;
}
.col-b {
    width: 343px;
    margin-right: 72px;
}
.col-c {
    width: 125px;
}
.review {
    margin-top: 12px;
    position: relative;
}
.review .req {
    width: 200px;
}
.review-line {
    display: flex;
}
.input.focused {
    width: 126px;
    border: 2px solid #0f62fe;
    background-color: #fff;
    padding-left: 14px;
}
.caret {
    width: 1px;
    height: 14px;
    background-color: #111;
}
.lookup {
    width: 39px;
    height: 40px;
    margin-top: 8px;
    background-color: #fff;
    border-bottom: 1px solid #bbb;
    display: flex;
    align-items: center;
    justify-content: center;
    color: #161616;
}
.under-rule {
    width: 343px;
    height: 1px;
    margin-top: 75px;
    background-color: #999;
}
.suggest {
    position: absolute;
    left: 0;
    top: 64px;
    width: 122px;
    height: 78px;
    background-color: #fafafa;
    border-radius: 3px;
    border: 1px solid #ccc;
    box-shadow: 2px 2px 4px rgba(0, 0, 0, .45);
    font-family: "Inter", "Liberation Sans", sans-serif;
    font-size: 12px;
}
.suggest-row {
    height: 38px;
    display: flex;
    align-items: center;
    padding-left: 11px;
    padding-bottom: 3px;
    color: #777;
}
.suggest-row mark {
    background-color: #dbe7f1;
    color: #666;
}
.search-for {
    border-top: 1px solid #aaa;
    padding-left: 15px;
    gap: 3px;
    color: #0f62fe;
}
.search-for svg {
    color: #222;
}
.search-for mark {
    color: #1a2fb0;
    font-weight: 600;
}
.h-scroll {
    position: absolute;
    left: 18px;
    right: 24px;
    bottom: 0;
    height: 12px;
    background-color: #a8a8a8;
    border-radius: 6px;
}
.v-scroll {
    position: absolute;
    top: 3px;
    right: 2px;
    width: 12px;
    height: 50px;
    background-color: #a8a8a8;
    border-radius: 6px;
}

/* host taskbars */
.host-taskbar {
    height: 40px;
    flex: none;
    background-color: #0a0a0a;
    display: flex;
    align-items: center;
    padding-left: 16px;
}
.host-search {
    margin-left: 29px;
}
.host-view {
    margin-left: 29px;
}
.host-task {
    height: 40px;
    display: flex;
    align-items: center;
    gap: 4px;
    font-size: 12.1px;
    color: #eee;
    white-space: nowrap;
}
.host-task.edge {
    width: 160px;
    margin-left: 19px;
    margin-right: 1px;
    padding-left: 10px;
    background-color: #333;
    border-bottom: 3px solid #72aee6;
}
.host-task.teams {
    width: 160px;
    padding-left: 11px;
    gap: 2px;
    background-color: #964f1a;
    border-bottom: 3px solid #f3720f;
}
.win-taskbar {
    flex: 1;
    background-color: #d9d9d9;
    border-top: 1px solid #bbb;
    display: flex;
    align-items: center;
    position: relative;
}
.weather {
    position: relative;
    margin-left: 20px;
    width: 24px;
}
.badge {
    position: absolute;
    left: 11px;
    top: -7px;
    width: 16px;
    height: 16px;
    border-radius: 50%;
    background-color: #c0271c;
    color: #fff;
    font-size: 10px;
    text-align: center;
    line-height: 16px;
}
.pins {
    margin-left: 275px;
    display: flex;
    align-items: center;
    height: 47px;
}
.pin {
    margin: 0 10px;
}
.pin-wrap {
    width: 44px;
    height: 40px;
    display: flex;
    align-items: center;
    justify-content: center;
    position: relative;
    border-radius: 4px;
}
.run::after, .run-red::after, .run-blue::after {
    content: "";
    position: absolute;
    bottom: 1px;
    left: 50%;
    width: 6px;
    height: 3px;
    margin-left: -3px;
    border-radius: 2px;
    background-color: #777;
}
.run-red::after {
    background-color: #c42b1c;
}
.run-blue::after {
    width: 16px;
    margin-left: -8px;
    background-color: #0a78d4;
}
.flagged {
    background-color: #ecaeaa;
    width: 40px;
    margin: 0 2px;
}
.wide-flag {
    width: 34px;
    margin: 0 8px 0 2px;
    justify-content: flex-start;
    padding-left: 9px;
    box-shadow: 6px 0 0 0 #e8b0ac;
}
.current-app {
    background-color: #efefef;
    width: 34px;
    margin: 0 6px 0 4px;
    padding-left: 4px;
    box-shadow: 4px 0 0 -1px #e8e8e8;
}
.tray {
    margin-left: auto;
    display: flex;
    align-items: center;
    padding-right: 20px;
    height: 47px;
}
.tray-send {
    margin-left: 18px;
}
.tray-lang {
    margin-left: 18px;
    width: 24px;
    text-align: center;
    font-size: 11.5px;
    line-height: 16px;
}
.tray-wifi {
    margin-left: 18px;
}
.tray-vol {
    margin-left: 7px;
}
.tray-batt {
    margin-left: 7px;
}
.tray-clock {
    margin-left: 17px;
    width: 61px;
    text-align: right;
    font-size: 12px;
    line-height: 16px;
}

/* uipath dialog, floats over the desktop */
.dialog {
    position: absolute;
    left: 879px;
    top: 439px;
    width: 480px;
    height: 278px;
    background-color: #fff;
    border: 1px solid #d8d8d8;
    padding: 21px 23px 0 23px;
    font-family: "Open Sans", "Liberation Sans", sans-serif;
    color: #333;
}
.dialog-close {
    position: absolute;
    right: 18px;
    top: 19px;
    width: 9px;
    height: 9px;
    color: #777;
}
.dialog-title {
    display: flex;
    align-items: flex-start;
    gap: 8px;
    font-size: 17.4px;
    font-weight: 500;
    line-height: 22px;
    color: #111;
    height: 24px;
}
.ui-logo {
    width: 24px;
    height: 24px;
    border: 3px solid #f4511e;
    color: #f4511e;
    font-family: "Liberation Sans", sans-serif;
    font-size: 14px;
    font-weight: 700;
    text-align: center;
    line-height: 18px;
}
.dialog-text {
    margin: 18px 0 0;
    width: 432px;
    font-size: 13.2px;
    line-height: 17px;
}
.dialog-text.second {
    margin-top: 23px;
}
.dialog-foot {
    display: flex;
    align-items: center;
    margin-top: 16px;
    padding-left: 8px;
}
.copy-link {
    color: #0067df;
    font-size: 11.5px;
    font-weight: 600;
}
.btn {
    height: 31px;
    display: flex;
    align-items: center;
    justify-content: center;
    font-size: 13px;
    font-weight: 600;
    border-radius: 3px;
}
.btn.primary {
    width: 118px;
    margin-left: auto;
    background-color: #0067df;
    color: #fff;
}
.btn.later {
    width: 74px;
    margin-left: 12px;
    border: 1px solid #b8c4cc;
    color: #0067df;
}
```
